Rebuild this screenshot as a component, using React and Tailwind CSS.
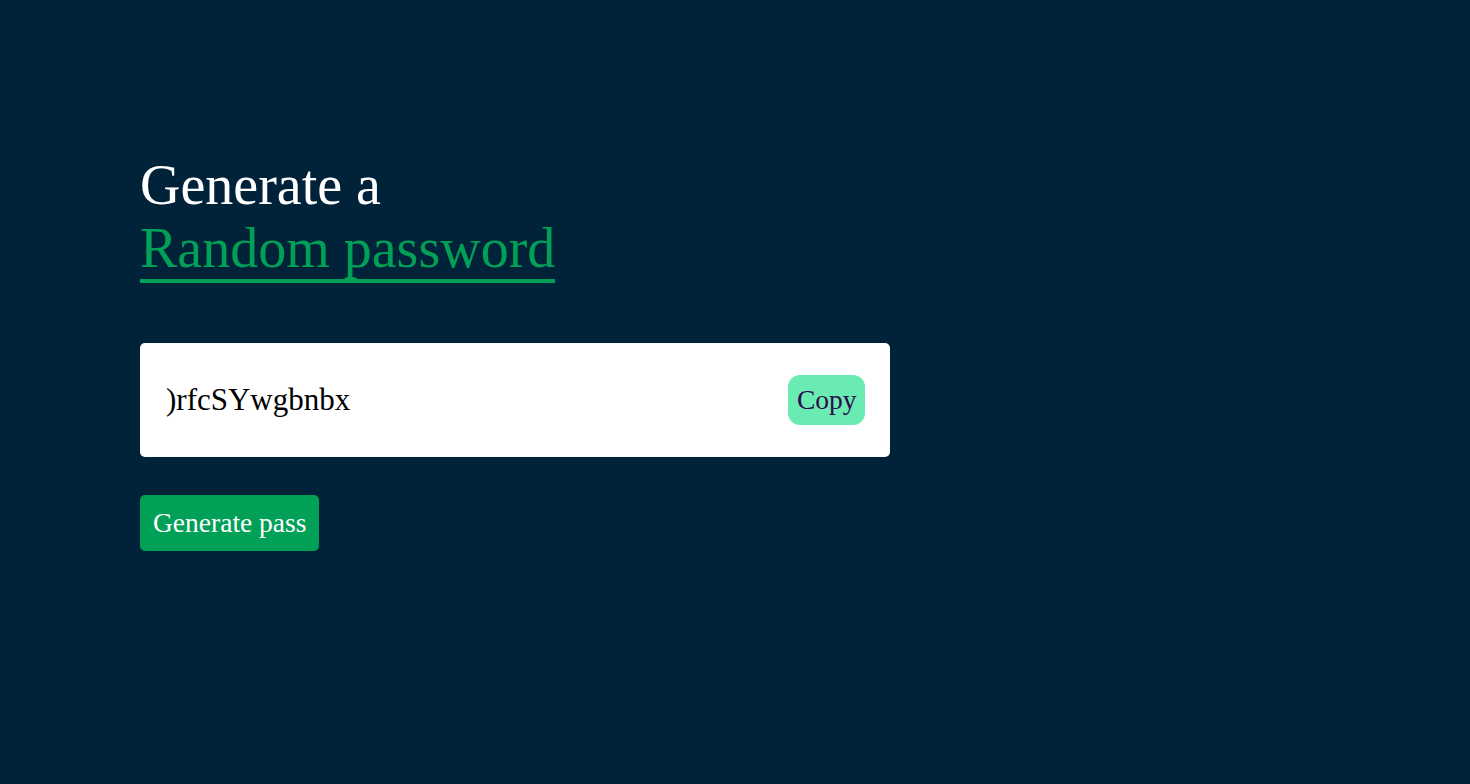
import React, { useState } from 'react';

const App = () => {
  const [password, setPassword] = useState(')rfcSYwgbnbx');

  const generatePass = () => {
    const chars = 'ABCDEFGHIJKLMNOPQRSTUVWXYZabcdefghijklmnopqrstuvwxyz0123456789!@#$%^&*()';
    let pass = '';
    for (let i = 0; i < 12; i++) {
      pass += chars[Math.floor(Math.random() * chars.length)];
    }
    setPassword(pass);
  };

  return (
    <div className="min-h-screen w-full bg-[#00233a] font-['Liberation_Serif',serif] pl-[140px] pt-[154px]">
      {/* Heading */}
      <h1 className="text-[56px] leading-[63px] text-white">
        Generate a
        <br />
        <span className="inline-block text-[#00a057] border-b-4 border-[#00a057] leading-[62px]">
          Random password
        </span>
      </h1>

      {/* Password box */}
      <div className="mt-[60px] w-[750px] h-[114px] bg-white rounded-[5px] flex items-center justify-between pl-[26px] pr-[25px]">
        <span className="text-[31px] text-black">{password}</span>
        <button
          onClick={() => navigator.clipboard?.writeText(password)}
          className="h-[50px] px-[8.5px] rounded-xl bg-[#6aebb1] text-[#2e0a4f] text-[27.5px] cursor-pointer"
        >
          Copy
        </button>
      </div>

      {/* Generate button */}
      <button
        onClick={generatePass}
        className="mt-[38px] h-[56px] px-[13px] rounded-[5px] bg-[#00a057] text-white text-[27.5px] cursor-pointer"
      >
        Generate pass
      </button>
    </div>
  );
};

export default App;
